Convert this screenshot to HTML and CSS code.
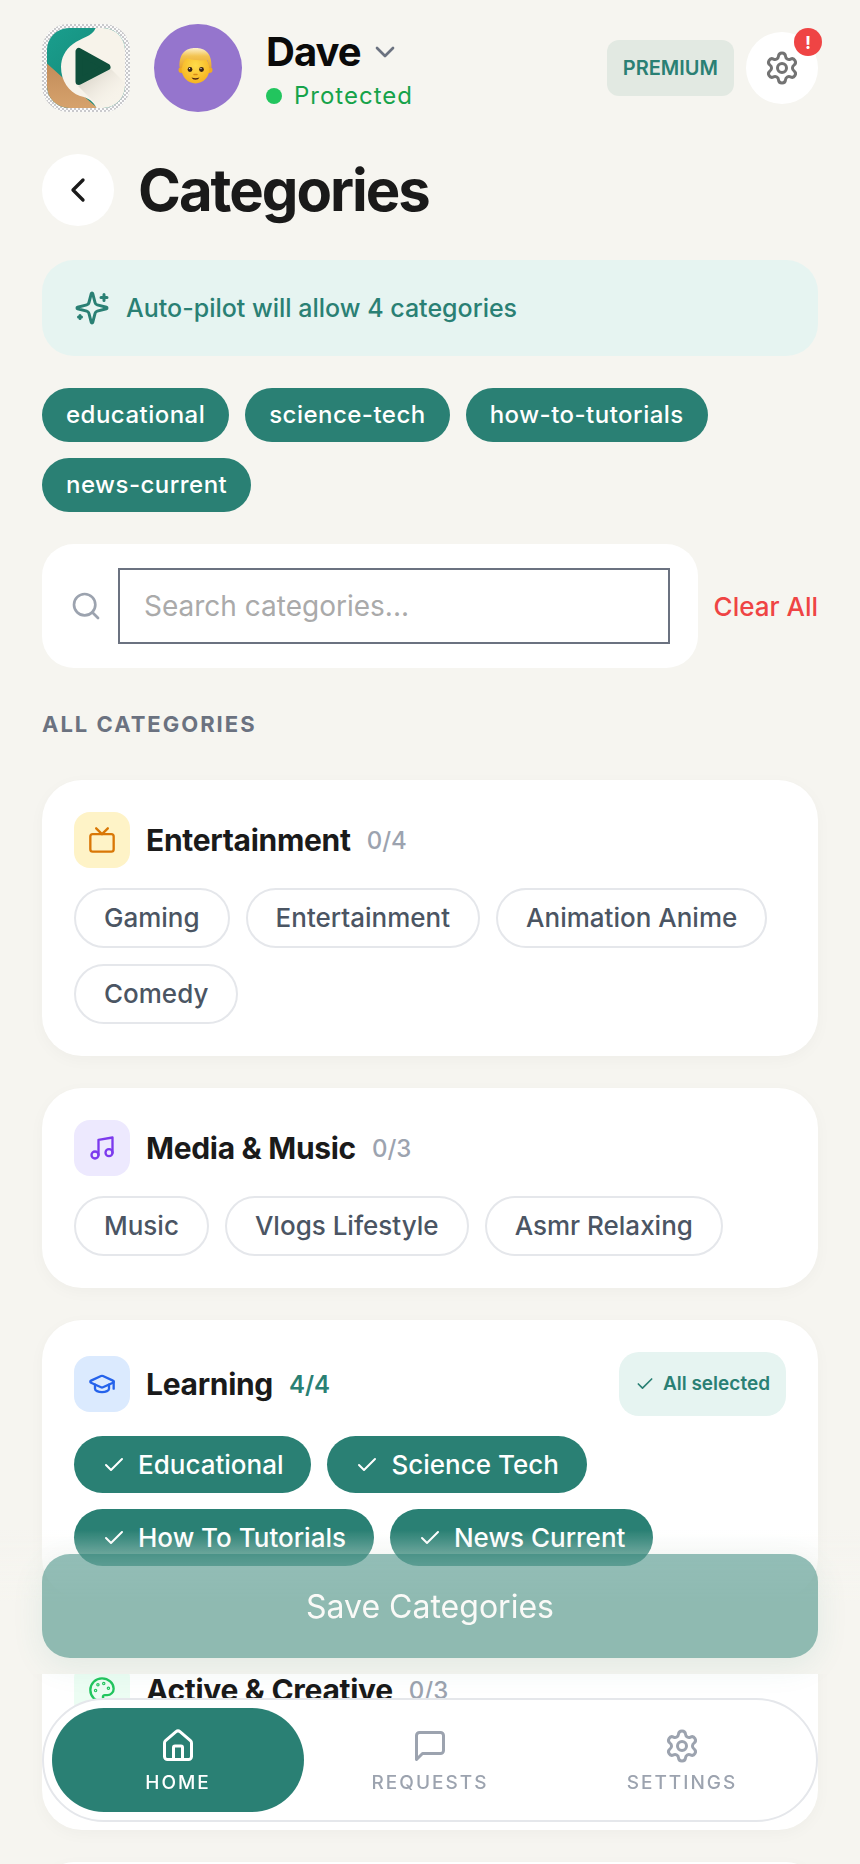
FILE: index.html
```
<!DOCTYPE html>
<html lang="en">

<head>
	<meta charset="utf-8">
	<meta name="viewport" content="width=device-width, initial-scale=1">
	<title>Categories</title>
	<link rel="stylesheet" href="styles.css">
</head>

<body>
	<!-- shared icons -->
	<svg class="defs" width="0" height="0" aria-hidden="true">
		<symbol id="check" viewBox="0 0 24 24">
			<path d="M20 6 9 17l-5-5" />
		</symbol>
		<symbol id="gear" viewBox="0 0 24 24">
			<path d="M9.671 4.136a2.34 2.34 0 0 1 4.659 0 2.34 2.34 0 0 0 3.319 1.915 2.34 2.34 0 0 1 2.33 4.033 2.34 2.34 0 0 0 0 3.831 2.34 2.34 0 0 1-2.33 4.033 2.34 2.34 0 0 0-3.319 1.915 2.34 2.34 0 0 1-4.659 0 2.34 2.34 0 0 0-3.32-1.915 2.34 2.34 0 0 1-2.33-4.033 2.34 2.34 0 0 0 0-3.831A2.34 2.34 0 0 1 6.35 6.051a2.34 2.34 0 0 0 3.319-1.915" />
			<circle cx="12" cy="12" r="3" />
		</symbol>
	</svg>

	<div class="page">
		<header class="header">
			<svg class="logo" viewBox="0 0 88 88">
				<defs>
					<pattern id="checker" width="4" height="4" patternUnits="userSpaceOnUse">
						<rect width="4" height="4" fill="#fbfbfb" />
						<rect width="2" height="2" fill="#c9c9cc" />
						<rect x="2" y="2" width="2" height="2" fill="#c9c9cc" />
					</pattern>
					<clipPath id="logoClip">
						<rect x="5" y="4" width="78" height="80" rx="22" />
					</clipPath>
					<linearGradient id="teal" x1="0" y1="0" x2="1" y2="1">
						<stop offset="0" stop-color="#1aa08f" />
						<stop offset="1" stop-color="#12806f" />
					</linearGradient>
					<linearGradient id="sand" x1="0" y1="0" x2="0" y2="1">
						<stop offset="0" stop-color="#c08a58" />
						<stop offset="1" stop-color="#d8a46e" />
					</linearGradient>
					<linearGradient id="shade" x1="0" y1="0" x2="1" y2="1">
						<stop offset="0" stop-color="#a9a294" stop-opacity=".6" />
						<stop offset=".8" stop-color="#f7f2e8" stop-opacity="0" />
					</linearGradient>
				</defs>
				<rect width="88" height="88" rx="26" fill="url(#checker)" />
				<g clip-path="url(#logoClip)">
					<rect width="88" height="88" fill="url(#teal)" />
					<path d="M0 35 30 62 60 88H0z" fill="url(#sand)" />
					<path d="M54 3C51 13 40 13 31 20 23 26 19 34 19 43c0 14 8 25 19 29 9 2 14 6 17 13h35V3z" fill="#f7f3ea" />
					<path d="M36 62 69 45 83 59V84H58z" fill="url(#shade)" />
				</g>
				<path d="M37 27.500v30L65 43z" fill="#0f4f3b" stroke="#0f4f3b" stroke-width="7" stroke-linejoin="round" />
			</svg>
			<svg class="avatar" viewBox="0 0 88 88">
				<defs>
					<radialGradient id="skin" cx=".5" cy=".4" r=".6">
						<stop offset="0" stop-color="#ffdc4a" />
						<stop offset="1" stop-color="#f6b422" />
					</radialGradient>
					<linearGradient id="hair" x1="0" y1="0" x2="0" y2="1">
						<stop offset="0" stop-color="#fdf0cc" />
						<stop offset=".4" stop-color="#f3c452" />
						<stop offset="1" stop-color="#e9a52c" />
					</linearGradient>
				</defs>
				<circle cx="27.500" cy="46" r="3" fill="#f0ab20" />
				<circle cx="55.500" cy="46" r="3" fill="#f0ab20" />
				<ellipse cx="41.500" cy="44.500" rx="14" ry="15" fill="url(#skin)" />
				<path d="M25.500 43C25 29 32 24 41.500 24S58 29 57.500 43l-2.500 1c0-4-1-7-2-8-7 1-16 0-20-2-3 2-4.500 6-5 10z" fill="url(#hair)" />
				<circle cx="36" cy="45.500" r="2.400" fill="#3b2314" />
				<circle cx="47.500" cy="45.500" r="2.400" fill="#3b2314" />
				<circle cx="35.500" cy="44.600" r=".7" fill="#fff" />
				<circle cx="47" cy="44.600" r=".7" fill="#fff" />
				<path d="M40 50.500h3" stroke="#d98a17" stroke-width="1.500" stroke-linecap="round" />
				<path d="M37.500 53.500q4 1.500 8 0-1 2.200-4 2.200t-4-2.200z" fill="#4a2412" />
			</svg>
			<div class="profile">
				<button type="button" class="profile-name">
					<span>Dave</span>
					<svg class="icon icon-32" viewBox="0 0 24 24"><path d="m6 9 6 6 6-6" /></svg>
				</button>
				<div class="status">Protected</div>
			</div>
			<span class="premium">PREMIUM</span>
			<button type="button" class="round-btn settings" aria-label="Settings">
				<svg class="icon icon-36"><use href="#gear" /></svg>
				<span class="alert">!</span>
			</button>
		</header>

		<main class="content">
			<div class="title-row">
				<button type="button" class="round-btn" aria-label="Back">
					<svg class="icon icon-40" viewBox="0 0 24 24"><path d="m15 18-6-6 6-6" /></svg>
				</button>
				<h1>Categories</h1>
			</div>

			<div class="banner">
				<svg class="icon icon-36" viewBox="0 0 24 24">
					<path d="M9.937 15.500A2 2 0 0 0 8.500 14.063l-6.135-1.582a.5.5 0 0 1 0-.962L8.500 9.936A2 2 0 0 0 9.937 8.500l1.582-6.135a.5.5 0 0 1 .963 0L14.063 8.500A2 2 0 0 0 15.500 9.937l6.135 1.581a.5.5 0 0 1 0 .964L15.500 14.063a2 2 0 0 0-1.437 1.437l-1.582 6.135a.5.5 0 0 1-.963 0z" />
					<path d="M20 3v4M22 5h-4M4 17v2M5 18H3" />
				</svg>
				<span>Auto-pilot will allow 4 categories</span>
			</div>

			<ul class="chips">
				<li class="chip">educational</li>
				<li class="chip">science-tech</li>
				<li class="chip">how-to-tutorials</li>
				<li class="chip">news-current</li>
			</ul>

			<div class="search-row">
				<label class="search">
					<svg class="icon icon-32" viewBox="0 0 24 24">
						<circle cx="11" cy="11" r="8" />
						<path d="m21 21-4.300-4.300" />
					</svg>
					<input type="text" placeholder="Search categories..." aria-label="Search categories">
				</label>
				<button type="button" class="clear">Clear All</button>
			</div>

			<h2 class="section-label">ALL CATEGORIES</h2>

			<section class="card">
				<div class="card-head">
					<div class="badge badge-amber">
						<svg class="icon icon-28" viewBox="0 0 24 24">
							<rect x="2" y="7" width="20" height="15" rx="2" />
							<path d="m17 2-5 5-5-5" />
						</svg>
					</div>
					<h3>Entertainment</h3>
					<span class="count">0/4</span>
				</div>
				<div class="pills">
					<button type="button" class="pill">Gaming</button>
					<button type="button" class="pill">Entertainment</button>
					<button type="button" class="pill">Animation Anime</button>
					<button type="button" class="pill">Comedy</button>
				</div>
			</section>

			<section class="card">
				<div class="card-head">
					<div class="badge badge-violet">
						<svg class="icon icon-28" viewBox="0 0 24 24">
							<path d="M9 18V5l12-2v13" />
							<circle cx="6" cy="18" r="3" />
							<circle cx="18" cy="16" r="3" />
						</svg>
					</div>
					<h3>Media &amp; Music</h3>
					<span class="count">0/3</span>
				</div>
				<div class="pills">
					<button type="button" class="pill">Music</button>
					<button type="button" class="pill">Vlogs Lifestyle</button>
					<button type="button" class="pill">Asmr Relaxing</button>
				</div>
			</section>

			<section class="card">
				<div class="card-head">
					<div class="badge badge-blue">
						<svg class="icon icon-28" viewBox="0 0 24 24">
							<path d="M21.420 10.922a1 1 0 0 0-.019-1.838L12.830 5.180a2 2 0 0 0-1.660 0L2.600 9.080a1 1 0 0 0 0 1.832l8.570 3.908a2 2 0 0 0 1.660 0z" />
							<path d="M22 10v6" />
							<path d="M6 12.500V16a6 3 0 0 0 12 0v-3.500" />
						</svg>
					</div>
					<h3>Learning</h3>
					<span class="count count-full">4/4</span>
					<button type="button" class="all-selected">
						<svg class="icon icon-20"><use href="#check" /></svg>
						All selected
					</button>
				</div>
				<div class="pills">
					<button type="button" class="pill pill-on"><svg class="icon icon-24"><use href="#check" /></svg>Educational</button>
					<button type="button" class="pill pill-on"><svg class="icon icon-24"><use href="#check" /></svg>Science Tech</button>
					<button type="button" class="pill pill-on"><svg class="icon icon-24"><use href="#check" /></svg>How To Tutorials</button>
					<button type="button" class="pill pill-on"><svg class="icon icon-24"><use href="#check" /></svg>News Current</button>
				</div>
			</section>

			<section class="card">
				<div class="card-head">
					<div class="badge badge-green">
						<svg class="icon icon-28" viewBox="0 0 24 24">
							<path d="M12 2C6.500 2 2 6.500 2 12s4.500 10 10 10c.926 0 1.648-.746 1.648-1.688 0-.437-.18-.835-.437-1.125-.29-.289-.438-.652-.438-1.125a1.640 1.640 0 0 1 1.668-1.668h1.996c3.051 0 5.555-2.503 5.555-5.554C21.965 6.012 17.461 2 12 2z" />
							<circle cx="13.500" cy="6.500" r=".5" />
							<circle cx="17.500" cy="10.500" r=".5" />
							<circle cx="8.500" cy="7.500" r=".5" />
							<circle cx="6.500" cy="12.500" r=".5" />
						</svg>
					</div>
					<h3>Active &amp; Creative</h3>
					<span class="count">0/3</span>
				</div>
				<div class="pills"></div>
			</section>

			<section class="card"></section>
		</main>
	</div>

	<div class="save-bar">
		<button type="button" class="save" disabled>Save Categories</button>
	</div>

	<nav class="tabs">
		<a href="#" class="tab tab-active">
			<svg class="icon icon-36" viewBox="0 0 24 24">
				<path d="M15 21v-8a1 1 0 0 0-1-1h-4a1 1 0 0 0-1 1v8" />
				<path d="M3 10a2 2 0 0 1 .709-1.528l7-5.999a2 2 0 0 1 2.582 0l7 5.999A2 2 0 0 1 21 10v9a2 2 0 0 1-2 2H5a2 2 0 0 1-2-2z" />
			</svg>
			HOME
		</a>
		<a href="#" class="tab">
			<svg class="icon icon-36" viewBox="0 0 24 24"><path d="M21 15a2 2 0 0 1-2 2H7l-4 4V5a2 2 0 0 1 2-2h14a2 2 0 0 1 2 2z" /></svg>
			REQUESTS
		</a>
		<a href="#" class="tab">
			<svg class="icon icon-36"><use href="#gear" /></svg>
			SETTINGS
		</a>
	</nav>
</body>

</html>
```
FILE: styles.css
```
* {
	margin: 0;
	padding: 0;
	box-sizing: border-box;
}

body {
	height: 100vh;
	overflow: hidden;
	background: #f6f5f0;
	color: #1a1a1a;
	font-family: Inter, "Liberation Sans", sans-serif;
}

ul {
	list-style: none;
}

a {
	text-decoration: none;
}

button {
	border: 0;
	background: none;
	color: inherit;
	font: inherit;
}

.defs {
	position: absolute;
}

.icon {
	display: block;
	flex: none;
	fill: none;
	stroke: currentColor;
	stroke-width: 2;
	stroke-linecap: round;
	stroke-linejoin: round;
}

.icon-20 { width: 20px; height: 20px; }
.icon-24 { width: 24px; height: 24px; }
.icon-28 { width: 28px; height: 28px; }
.icon-32 { width: 32px; height: 32px; }
.icon-36 { width: 36px; height: 36px; }
.icon-40 { width: 40px; height: 40px; }

.page {
	height: 100vh;
	padding: 24px 42px;
	overflow-y: auto;
	scrollbar-width: none;
}

/* header */
.header {
	display: flex;
	align-items: center;
}

.logo,
.avatar {
	flex: none;
	width: 88px;
	height: 88px;
	margin-right: 24px;
}

.avatar {
	border-radius: 50%;
	background: #9575cd;
}

.profile {
	flex: 1;
	height: 88px;
	padding-top: 4px;
}

.profile-name {
	display: flex;
	align-items: center;
	gap: 8px;
	color: #0a0a0a;
	font-size: 40px;
	font-weight: 700;
	line-height: 48px;
	letter-spacing: -1px;
}

.profile-name .icon {
	color: #6b7280;
}

.status {
	display: flex;
	align-items: center;
	gap: 12px;
	color: #16a34a;
	font-size: 24px;
	line-height: 40px;
	letter-spacing: 1px;
}

.status::before {
	content: "";
	width: 16px;
	height: 16px;
	border-radius: 50%;
	background: #22c55e;
}

.premium {
	margin-right: 12px;
	padding: 12px 16px;
	border-radius: 12px;
	background: #e2e9e2;
	color: #2a8074;
	font-size: 20px;
	font-weight: 600;
	line-height: 32px;
}

.round-btn {
	display: flex;
	flex: none;
	align-items: center;
	justify-content: center;
	width: 72px;
	height: 72px;
	border-radius: 50%;
	background: #fff;
}

.settings {
	position: relative;
	color: #737373;
}

.alert {
	position: absolute;
	top: -4px;
	right: -4px;
	width: 28px;
	height: 28px;
	border-radius: 50%;
	background: #ef4444;
	color: #fff;
	font-size: 18px;
	font-weight: 700;
	line-height: 30px;
	text-align: center;
}

/* content */
.content {
	display: flex;
	flex-direction: column;
	gap: 32px;
	padding-top: 42px;
}

.title-row {
	display: flex;
	align-items: center;
	gap: 24px;
}

h1 {
	font-size: 58px;
	font-weight: 700;
	line-height: 72px;
	letter-spacing: -2px;
}

.banner {
	display: flex;
	align-items: center;
	gap: 16px;
	margin-top: 2px;
	padding: 30px 32px;
	border-radius: 32px;
	background: #e6f4f1;
	color: #2a8074;
	font-size: 25px;
	font-weight: 500;
	line-height: 36px;
}

.chips,
.pills {
	display: flex;
	flex-wrap: wrap;
	gap: 16px;
}

.chip {
	padding: 8px 24px;
	border-radius: 27px;
	background: #2a8074;
	color: #fff;
	font-size: 24px;
	font-weight: 500;
	line-height: 38px;
	letter-spacing: 0.02em;
}

.search-row {
	display: flex;
	align-items: center;
	gap: 16px;
}

.search {
	display: flex;
	flex: 1;
	align-items: center;
	gap: 16px;
	padding: 24px 28px;
	border-radius: 32px;
	background: #fff;
	color: #9ca3af;
}

.search input {
	flex: 1;
	min-width: 0;
	height: 76px;
	padding: 0 24px;
	border: 2px solid #6b7280;
	color: #1a1a1a;
	font: 400 28px Inter, "Liberation Sans", sans-serif;
}

.search input::placeholder {
	color: #aaa;
}

.clear {
	color: #ef4444;
	font-size: 26px;
	font-weight: 500;
}

.section-label {
	margin: 8px 0;
	color: #6b7280;
	font-size: 22px;
	font-weight: 700;
	line-height: 32px;
	letter-spacing: 2px;
}

/* cards */
.card {
	padding: 32px;
	border-radius: 40px;
	background: #fff;
	box-shadow: 0 4px 16px rgba(0, 0, 0, 0.03);
}

.card-head {
	display: flex;
	align-items: center;
	gap: 16px;
	margin-bottom: 20px;
}

.card h3 {
	font-size: 30px;
	font-weight: 700;
	line-height: 40px;
	letter-spacing: -0.01em;
}

.badge {
	display: flex;
	align-items: center;
	justify-content: center;
	width: 56px;
	height: 56px;
	border-radius: 16px;
}

.badge-amber {
	background: #fef3c7;
	color: #d97706;
}

.badge-violet {
	background: #ede9fe;
	color: #7c3aed;
}

.badge-blue {
	background: #dbeafe;
	color: #2563eb;
}

.badge-green {
	background: #ecfdf3;
	color: #22c55e;
}

.count {
	color: #9ca3af;
	font-size: 24px;
	font-weight: 500;
}

.count-full {
	color: #2a8074;
	font-weight: 600;
}

.all-selected {
	display: flex;
	align-items: center;
	gap: 8px;
	margin-left: auto;
	padding: 16px;
	border-radius: 20px;
	background: #e6f4f1;
	color: #2a8074;
	font-size: 19px;
	font-weight: 600;
	line-height: 32px;
}

.pills {
	min-height: 60px;
}

.pill {
	display: flex;
	align-items: center;
	gap: 12px;
	padding: 8px 28px;
	border: 2px solid #e5e7eb;
	border-radius: 30px;
	color: #4b5563;
	font-size: 26px;
	font-weight: 500;
	line-height: 40px;
}

.pill-on {
	border: 0;
	background: #2a8074;
	color: #fff;
	line-height: 41px;
}

/* save button, fades the list out behind it */
.save-bar {
	position: fixed;
	right: 0;
	bottom: 190px;
	left: 0;
	padding: 24px 42px 16px;
	background: linear-gradient(rgba(246, 245, 240, 0), #f6f5f0 50%);
}

.save {
	width: 100%;
	padding: 33px 32px 31px;
	border-radius: 28px;
	background: #2a8074;
	box-shadow: 0 8px 32px rgba(42, 128, 116, 0.2);
	color: #fff;
	font-size: 32px;
	font-weight: 400;
	line-height: 40px;
	opacity: 0.5;
}

/* bottom tabs */
.tabs {
	position: fixed;
	right: 42px;
	bottom: 42px;
	left: 42px;
	display: flex;
	padding: 8px;
	border: 2px solid #e5e7eb;
	border-radius: 62px;
	background: #fff;
}

.tab {
	display: flex;
	flex: 1;
	flex-direction: column;
	align-items: center;
	gap: 8px;
	padding: 20px 0 18px;
	border-radius: 52px;
	color: #9ca3af;
	font-size: 19px;
	font-weight: 500;
	line-height: 22px;
	letter-spacing: 2px;
}

.tab-active {
	background: #2a8074;
	color: #fff;
}
```
